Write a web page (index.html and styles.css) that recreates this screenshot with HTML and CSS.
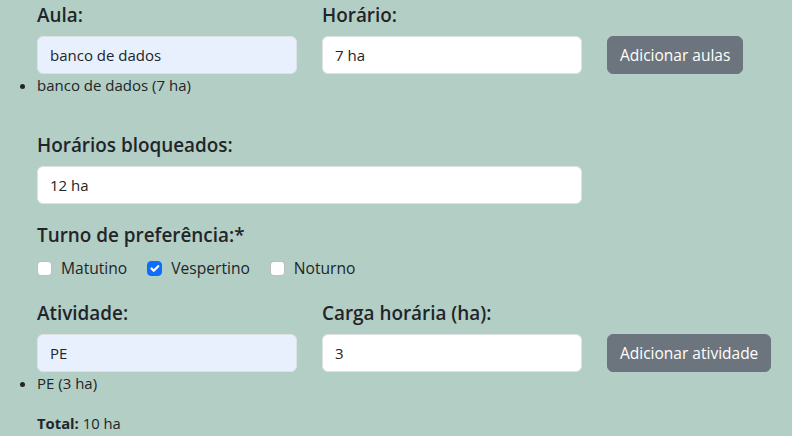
FILE: index.html
```html
<!DOCTYPE html>
<html lang="pt-BR">
<head>
<meta charset="utf-8">
<title>Formulário</title>
<link rel="stylesheet" href="styles.css">
</head>
<body>
<main class="page">
  <section class="row">
    <div class="field">
      <label class="label">Aula:</label>
      <input class="input autofill" type="text" value="banco de dados">
    </div>
    <div class="field">
      <label class="label">Horário:</label>
      <input class="input" type="text" value="7 ha">
    </div>
    <button class="btn" type="button">Adicionar aulas</button>
  </section>
  <ul class="items">
    <li>banco de dados (7 ha)</li>
  </ul>

  <section class="block block-blocked">
    <label class="label">Horários bloqueados:</label>
    <input class="input input-wide" type="text" value="12 ha">
  </section>

  <section class="block block-turno">
    <div class="label">Turno de preferência:*</div>
    <div class="checks">
      <span class="check-item"><span class="box"></span>Matutino</span>
      <span class="check-item"><span class="box checked"><svg viewBox="0 0 20 20" width="15" height="15"><path d="M6 10l3 3 6-6" fill="none" stroke="#fff" stroke-width="3" stroke-linecap="round" stroke-linejoin="round"/></svg></span>Vespertino</span>
      <span class="check-item"><span class="box"></span>Noturno</span>
    </div>
  </section>

  <section class="row row-activity">
    <div class="field">
      <label class="label">Atividade:</label>
      <input class="input autofill" type="text" value="PE">
    </div>
    <div class="field">
      <label class="label">Carga horária (ha):</label>
      <input class="input" type="text" value="3">
    </div>
    <button class="btn" type="button">Adicionar atividade</button>
  </section>
  <ul class="items">
    <li>PE (3 ha)</li>
  </ul>

  <p class="total"><strong>Total:</strong> 10 ha</p>
</main>
</body>
</html>
```

FILE: styles.css
```css
* { box-sizing: border-box; }

html, body {
  margin: 0;
  padding: 0;
  background: #b3cec5;
}

body {
  font-family: "Open Sans", "Noto Sans", sans-serif;
  color: #212529;
}

.page {
  padding: 3px 0 0 37px;
}

.row {
  display: flex;
  align-items: flex-end;
  gap: 25px;
}

.field {
  display: flex;
  flex-direction: column;
  width: 260px;
}

.label {
  display: block;
  font-size: 18.9px;
  font-weight: 600;
  line-height: 24px;
  margin-bottom: 9px;
}

.input {
  display: block;
  width: 100%;
  height: 38px;
  padding: 0 12px;
  font-family: inherit;
  font-size: 15px;
  color: #212529;
  background: #fff;
  border: 1px solid #dee2e6;
  border-radius: 6px;
  outline: none;
}

.input.autofill {
  background: #e8f0fe;
}

.input-wide {
  width: 545px;
}

.btn {
  height: 38px;
  padding: 0 12px;
  font-family: inherit;
  font-size: 15.5px;
  color: #fff;
  background: #6c757d;
  border: 1px solid #6c757d;
  border-radius: 6px;
}

.items {
  margin: 1px 0 0;
  padding: 0;
  font-size: 15px;
  line-height: 21px;
}

.block-blocked { margin-top: 37px; }
.block-turno { margin-top: 19px; }

.checks {
  display: flex;
  align-items: center;
  padding-top: 1px;
  font-size: 15.6px;
  line-height: 22px;
}

.check-item {
  display: inline-flex;
  align-items: center;
  gap: 9px;
  margin-right: 20px;
}

.box {
  display: inline-block;
  width: 15px;
  height: 15px;
  background: #fff;
  border: 1px solid rgba(0, 0, 0, 0.25);
  border-radius: 4px;
  position: relative;
}

.box.checked {
  background: #0d6efd;
  border-color: #0d6efd;
}

.box.checked svg {
  position: absolute;
  left: -1px;
  top: -1px;
}

.row-activity { margin-top: 22px; }

.total {
  margin: 19px 0 0;
  font-size: 14.8px;
  line-height: 21px;
}

.total strong { font-weight: 700; }
```
